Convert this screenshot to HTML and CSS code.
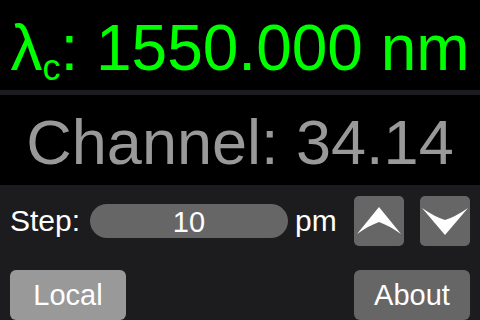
FILE: index.html
```html
<!DOCTYPE html>
<html lang="en">
<head>
    <meta charset="UTF-8">
    <meta name="viewport" content="width=device-width, initial-scale=1.0">
    <title>Laser Control</title>
    <link rel="stylesheet" href="styles.css">
</head>
<body>
    <div class="wavelength">&lambda;<span class="sub">c</span>: 1550.000 nm</div>
    <div class="divider"></div>
    <div class="channel">Channel: 34.14</div>

    <div class="controls">
        <div class="step-row">
            <label for="step">Step:</label>
            <input type="text" id="step" value="10">
            <span class="unit">pm</span>
            <button class="arrow-button" id="upButton" aria-label="Up">
                <svg width="50" height="50" viewBox="0 0 50 50">
                    <path d="M25 11 L47 38 Q34 29 25 26 Q16 29 3 38 Z" fill="#fff"/>
                </svg>
            </button>
            <button class="arrow-button" id="downButton" aria-label="Down">
                <svg width="50" height="50" viewBox="0 0 50 50">
                    <path d="M25 39 L48 12 Q35 21 25 24 Q15 21 2 12 Z" fill="#fff"/>
                </svg>
            </button>
        </div>
        <div class="button-row">
            <button class="mode-button local">Local</button>
            <button class="mode-button about">About</button>
        </div>
    </div>
</body>
</html>
```

FILE: styles.css
```css
body {
    margin: 0;
    padding: 0;
    font-family: 'Liberation Sans', Arial, sans-serif;
    background-color: #000;
    color: #fff;
    width: 480px;
    height: 320px;
    overflow: hidden;
}

.wavelength {
    height: 90px;
    box-sizing: border-box;
    padding-top: 6px;
    line-height: 84px;
    font-size: 64px;
    color: #00ff00;
    text-align: center;
    white-space: nowrap;
    overflow: hidden;
}

.sub {
    font-size: 36px;
    line-height: 0;
    vertical-align: -10px;
}

.divider {
    height: 5px;
    background-color: #1c1c1e;
}

.channel {
    height: 90px;
    box-sizing: border-box;
    padding-top: 5px;
    line-height: 84px;
    font-size: 63px;
    color: #999;
    text-align: center;
    white-space: nowrap;
    overflow: hidden;
}

.controls {
    background-color: #1c1c1e;
    height: 135px;
    box-sizing: border-box;
    padding: 11px 10px 0 10px;
}

.step-row {
    display: flex;
    align-items: center;
    height: 50px;
}

label {
    width: 80px;
    font-size: 30px;
    color: #fff;
}

input {
    width: 198px;
    height: 34px;
    box-sizing: border-box;
    border: none;
    border-radius: 17px;
    background-color: #666;
    color: #fff;
    font-family: inherit;
    font-size: 29px;
    text-align: center;
    padding: 2px 0 0 0;
    outline: none;
}

.unit {
    width: 59px;
    font-size: 30px;
    padding-left: 7px;
    box-sizing: border-box;
    margin-right: 7px;
}

.arrow-button {
    width: 50px;
    height: 50px;
    padding: 0;
    border: none;
    border-radius: 5px;
    background-color: #666;
    cursor: pointer;
    display: flex;
}

#downButton {
    margin-left: 16px;
}

.button-row {
    display: flex;
    justify-content: space-between;
    margin-top: 24px;
}

.mode-button {
    width: 116px;
    height: 50px;
    border: none;
    border-radius: 6px;
    color: #fff;
    font-family: inherit;
    font-size: 29px;
    cursor: pointer;
    padding: 0;
}

.local {
    background-color: #999;
}

.about {
    background-color: #666;
}
```
